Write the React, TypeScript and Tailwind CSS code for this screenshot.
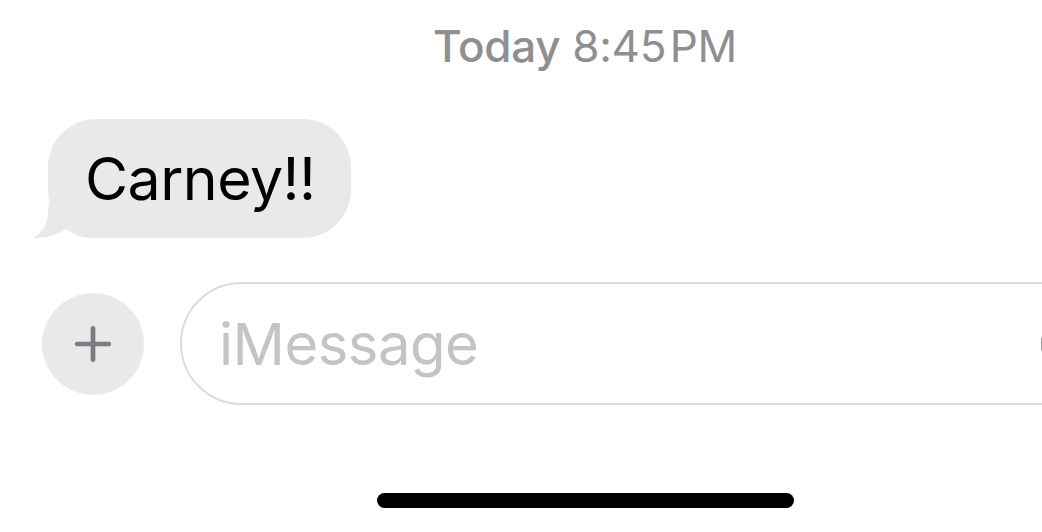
import { Plus } from "lucide-react";

const FONT = { fontFamily: "Inter, 'Noto Sans', 'Liberation Sans', sans-serif" };

function Bubble({ text }: { text: string }) {
  return (
    <div className="relative ml-[48px] w-fit">
      <svg
        className="absolute bottom-0 left-[-15px]"
        width="60"
        height="46"
        viewBox="0 0 60 46"
        aria-hidden
      >
        <path
          d="M30 0 C20 0 15 10 15 20 C15 32 9 41 0 46 C13 46 24 43 33 37 C40 42 48 46 60 46 L60 0 Z"
          fill="#e9e9eb"
        />
      </svg>
      <div className="relative flex h-[119px] items-center rounded-[48px] bg-[#e9e9eb] pl-[37px] pr-[35px]">
        <span className="text-[59px] leading-none tracking-[-0.5px] text-black">{text}</span>
      </div>
    </div>
  );
}

export default function App() {
  return (
    <div className="h-[532px] w-[1042px] overflow-hidden bg-white" style={FONT}>
      <div className="flex flex-col">
        <div className="pl-[433px] pt-[24px] text-[44px] leading-none tracking-[-0.3px] text-[#8e8e93]">
          <span className="font-medium">Today</span> <span>8:45&#8202;PM</span>
        </div>

        <div className="mt-[51px]">
          <Bubble text="Carney!!" />
        </div>

        <div className="mt-[44px] flex items-center">
          <div className="ml-[42px] flex h-[102px] w-[102px] shrink-0 items-center justify-center rounded-full bg-[#e9e9eb]">
            <Plus className="h-[54px] w-[54px] text-[#7c7c80]" strokeWidth={2.1} />
          </div>
          <div className="relative ml-[36px] flex h-[123px] w-[900px] shrink-0 items-center rounded-l-[62px] border-[2.5px] border-[#dcdcde] pl-[37px]">
            <span className="text-[58px] leading-none tracking-[-0.5px] text-[#c4c4c6]">iMessage</span>
            <div className="absolute left-[859px] top-[53px] h-[14px] w-[4px] rounded-full bg-[#9a9a9e]" />
          </div>
        </div>

        <div className="mt-[88px] flex">
          <div className="ml-[377px] h-[15px] w-[417px] rounded-full bg-black" />
        </div>
      </div>
    </div>
  );
}
